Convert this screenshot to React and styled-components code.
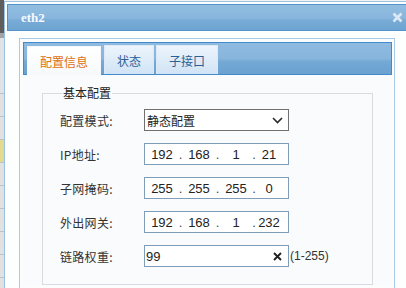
import React from "react";
import styled, { createGlobalStyle } from "styled-components";

const Global = createGlobalStyle`
  html, body { margin: 0; padding: 0; overflow: hidden; background: #f2f2f2; }
  #root { width: 406px; height: 288px; overflow: hidden; }
`;

const cjk = `"Noto Sans CJK SC", "Noto Sans", sans-serif`;

const Page = styled.div`
  display: flex;
  align-items: flex-start;
  width: 406px;
  height: 288px;
  overflow: hidden;
`;

const Strip = styled.div`
  width: 4px;
  height: 288px;
  flex: none;
  display: flex;
  flex-direction: column;
  background: #e1e1e1;
`;

const StripCell = styled.div`
  flex: none;
  height: ${(p) => p.$h}px;
  background: ${(p) => p.$bg};
  border-bottom: ${(p) => (p.$line ? "1px solid #b7c3cf" : "none")};
  box-sizing: border-box;
`;

const Dialog = styled.div`
  flex: none;
  width: 404px;
  margin-top: 1px;
  border: 1px solid #9cc2e3;
  padding: 2px;
  background: #fdfefe;
  display: flex;
  flex-direction: column;
`;

const Header = styled.div`
  flex: none;
  height: 27px;
  box-sizing: border-box;
  border: 1px solid #5492cc;
  background: linear-gradient(180deg, #91bde1 0%, #89b6dd 52%, #78acd7 60%, #6ea4d2 100%);
  display: flex;
  align-items: center;
  justify-content: space-between;
  padding: 0 7px 0 13px;
`;

const Title = styled.span`
  font-family: "Liberation Serif", serif;
  font-weight: bold;
  font-size: 13px;
  color: #f5f9fd;
`;

const Body = styled.div`
  flex: none;
  padding: 7px 0 0 12px;
`;

const Panel = styled.div`
  width: 376px;
  height: 260px;
  box-sizing: border-box;
  border: 1px solid #a9cbe8;
  background: #fbfdfd;
  padding: 3px 2px 3px 3px;
`;

const TabBar = styled.div`
  height: 33px;
  box-sizing: border-box;
  border: 1px solid #438acd;
  background: linear-gradient(180deg, #8fbbe0 0%, #88b5dc 50%, #74a9d5 60%, #6aa1d0 100%);
  display: flex;
  align-items: flex-end;
  padding-left: 3px;
  gap: 2px;
`;

const Tab = styled.div`
  height: 29px;
  box-sizing: border-box;
  padding: 0 12px;
  display: flex;
  align-items: center;
  font-family: ${cjk};
  font-size: 12px;
  position: relative;
  ${(p) =>
    p.$active
      ? `
    margin-bottom: -1px;
    margin-right: 1px;
    height: 29px;
    border: 1px solid #f4f8fb;
    border-bottom: none;
    background: linear-gradient(180deg, #ffffff 0%, #f6f9fb 100%);
    color: #e2700e;
  `
      : `
    border: 1px solid #dde9f6;
    border-bottom: none;
    background: linear-gradient(180deg, #ecf4fc 0%, #dfecf8 50%, #d0e3f5 100%);
    color: #2c5f96;
  `}
`;

const Content = styled.div`
  background: #f9fbfc;
  padding: 10px 19px 0 19px;
`;

const Fieldset = styled.fieldset`
  margin: 0;
  border: 1px solid #d6dce2;
  padding: 8px 0 17px 17px;
`;

const Legend = styled.legend`
  font-family: ${cjk};
  font-size: 12px;
  line-height: 16px;
  color: #222;
  padding: 0 1px;
  margin-left: 2px;
`;

const Rows = styled.div`
  display: flex;
  flex-direction: column;
  gap: 12px;
`;

const Row = styled.div`
  display: grid;
  grid-template-columns: 84px 145px auto;
  align-items: center;
  height: 22px;
`;

const Label = styled.span`
  font-family: ${cjk};
  font-size: 12px;
  color: #333;
  letter-spacing: 0.3px;
`;

const Box = styled.div`
  width: 145px;
  height: 22px;
  box-sizing: border-box;
  border: 1px solid ${(p) => (p.$dark ? "#707070" : "#7f9db9")};
  background: #fff;
  display: flex;
  align-items: center;
`;

const SelectBox = styled(Box)`
  justify-content: space-between;
  padding: 0 5px 0 2px;
`;

const SelectText = styled.span`
  font-family: ${cjk};
  font-size: 12px;
  color: #222;
`;

const IpBox = styled(Box)`
  padding-left: 3px;
`;

const Seg = styled.span`
  width: ${(p) => p.$w}px;
  flex: none;
  text-align: center;
  font-family: "Liberation Sans", Arial, sans-serif;
  font-size: 13px;
  color: #222;
`;

const Dot = styled(Seg)`
  color: #444;
`;

const TextBox = styled(Box)`
  justify-content: space-between;
  padding: 0 6px 0 1px;
`;

const Value = styled.span`
  font-family: "Liberation Sans", Arial, sans-serif;
  font-size: 13px;
  color: #222;
`;

const Hint = styled.span`
  font-family: "Liberation Sans", Arial, sans-serif;
  font-size: 12px;
  color: #333;
  padding-left: 1px;
`;

const stripCells = [
  { h: 33, bg: "#5e5e5e" },
  { h: 5, bg: "#a3a3a3" },
  { h: 56, bg: "#dfe3e8", line: true },
  { h: 23, bg: "#e1e1e1", line: true },
  { h: 23, bg: "#e1e1e1", line: true },
  { h: 23, bg: "#e3d98f", line: true },
  { h: 23, bg: "#e1e1e1", line: true },
  { h: 23, bg: "#e1e1e1", line: true },
  { h: 23, bg: "#e1e1e1", line: true },
  { h: 23, bg: "#e1e1e1", line: true },
  { h: 23, bg: "#e1e1e1", line: true },
];

const segW = [28, 28, 28, 22];
const dotW = [9, 9, 8];

function Ip({ parts }) {
  const out = [];
  parts.forEach((p, i) => {
    out.push(
      <Seg key={"s" + i} $w={segW[i]}>
        {p}
      </Seg>
    );
    if (i < 3)
      out.push(
        <Dot key={"d" + i} $w={dotW[i]}>
          .
        </Dot>
      );
  });
  return <IpBox>{out}</IpBox>;
}

export default function App() {
  return (
    <>
      <Global />
      <Page>
        <Strip>
          {stripCells.map((c, i) => (
            <StripCell key={i} $h={c.h} $bg={c.bg} $line={c.line} />
          ))}
        </Strip>
        <Dialog>
          <Header>
            <Title>eth2</Title>
            <svg width="11" height="11" viewBox="0 0 11 11">
              <path d="M1.5 1.5 L9.5 9.5 M9.5 1.5 L1.5 9.5" stroke="#dce8f4" strokeWidth="2.6" />
            </svg>
          </Header>
          <Body>
            <Panel>
              <TabBar>
                <Tab $active>配置信息</Tab>
                <Tab>状态</Tab>
                <Tab>子接口</Tab>
              </TabBar>
              <Content>
                <Fieldset>
                  <Legend>基本配置</Legend>
                  <Rows>
                    <Row>
                      <Label>配置模式:</Label>
                      <SelectBox $dark>
                        <SelectText>静态配置</SelectText>
                        <svg width="11" height="7" viewBox="0 0 11 7">
                          <path d="M1 1 L5.5 5.5 L10 1" fill="none" stroke="#2a2a2a" strokeWidth="1.6" />
                        </svg>
                      </SelectBox>
                    </Row>
                    <Row>
                      <Label>IP地址:</Label>
                      <Ip parts={["192", "168", "1", "21"]} />
                    </Row>
                    <Row>
                      <Label>子网掩码:</Label>
                      <Ip parts={["255", "255", "255", "0"]} />
                    </Row>
                    <Row>
                      <Label>外出网关:</Label>
                      <Ip parts={["192", "168", "1", "232"]} />
                    </Row>
                    <Row>
                      <Label>链路权重:</Label>
                      <TextBox>
                        <Value>99</Value>
                        <svg width="9" height="9" viewBox="0 0 9 9">
                          <path d="M1 1 L8 8 M8 1 L1 8" stroke="#1e1e1e" strokeWidth="1.8" />
                        </svg>
                      </TextBox>
                      <Hint>(1-255)</Hint>
                    </Row>
                  </Rows>
                </Fieldset>
              </Content>
            </Panel>
          </Body>
        </Dialog>
      </Page>
    </>
  );
}
